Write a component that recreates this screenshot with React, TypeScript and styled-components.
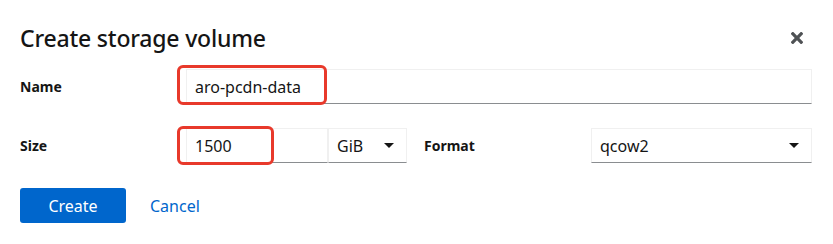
import styled, {createGlobalStyle} from "styled-components";

const GlobalStyle = createGlobalStyle`
    body {
        margin: 0;
        background: #FFFFFF;
        font-family: "Noto Sans", "Open Sans", sans-serif;
        color: #151515;
    }
`

const Modal = styled.div`
    width: 833px;
    height: 244px;
    box-sizing: border-box;
    padding: 22px 21px 0 20px;
    background: #FFFFFF;
`

const Header = styled.div`
    display: flex;
    align-items: center;
    justify-content: space-between;
`

const Title = styled.h1`
    margin: 0;
    font-family: "Noto Sans", sans-serif;
    font-size: 23px;
    font-weight: 500;
    line-height: 32px;
    letter-spacing: -0.2px;
    color: #151515;
`

const CloseButton = styled.button`
    border: none;
    background: none;
    padding: 0;
    margin-right: 9px;
    width: 13px;
    height: 13px;
    display: flex;
    align-items: center;
    justify-content: center;
    color: #4f5255;
    cursor: pointer;
`

const Form = styled.div`
    margin-top: 15px;
    display: grid;
    row-gap: 24px;
`

const FieldRow = styled.div`
    display: grid;
    grid-template-columns: 166px 1fr;
    align-items: center;
`

const SizeRow = styled.div`
    display: grid;
    grid-template-columns: 166px 142px 79px 184px 1fr;
    align-items: center;
`

const Label = styled.label<{indent?: boolean}>`
    font-size: 14px;
    font-weight: 700;
    color: #151515;
    padding-left: ${p => p.indent ? '17px' : '0'};
`

const Control = styled.div`
    position: relative;
    height: 35px;
    box-sizing: border-box;
    border: 1px solid #f0f0f0;
    border-bottom-color: #8a8d90;
    display: flex;
    align-items: center;
    justify-content: space-between;
    padding: 0 11px 0 8px;
    font-size: 16px;
    color: #151515;
    background: #FFFFFF;
`

const SelectControl = styled(Control)`
    padding-right: 12px;
`

const Caret = styled.span`
    width: 0;
    height: 0;
    border-left: 5px solid transparent;
    border-right: 5px solid transparent;
    border-top: 5px solid #151515;
`

const Highlight = styled.div<{w: number; h: number; top: number}>`
    position: absolute;
    left: -10px;
    top: ${p => p.top}px;
    width: ${p => p.w}px;
    height: ${p => p.h}px;
    box-sizing: border-box;
    border: 3px solid #e8392b;
    border-radius: 6px;
    pointer-events: none;
`

const Footer = styled.div`
    margin-top: 25px;
    display: flex;
    align-items: center;
    gap: 24px;
`

const PrimaryButton = styled.button`
    width: 106px;
    height: 35px;
    border: none;
    border-radius: 3px;
    background: #0066cc;
    color: #FFFFFF;
    font-family: "Noto Sans", sans-serif;
    font-size: 16px;
    cursor: pointer;
`

const LinkButton = styled.button`
    border: none;
    background: none;
    padding: 0;
    color: #0066cc;
    font-family: "Noto Sans", sans-serif;
    font-size: 16px;
    cursor: pointer;
`

export default function App() {
    return (
        <>
            <GlobalStyle/>
            <Modal>
                <Header>
                    <Title>Create storage volume</Title>
                    <CloseButton aria-label="Close">
                        <svg width="12" height="12" viewBox="0 0 352 352" fill="currentColor">
                            <path d="M242.72 176L342.79 75.930c12.28-12.28 12.28-32.19 0-44.48L320.55 9.21c-12.28-12.28-32.19-12.28-44.48 0L176 109.28 75.930 9.21c-12.28-12.28-32.19-12.28-44.48 0L9.21 31.45c-12.28 12.28-12.28 32.19 0 44.48L109.28 176 9.21 276.07c-12.28 12.28-12.28 32.19 0 44.48l22.24 22.240c12.28 12.28 32.2 12.28 44.48 0L176 242.72l100.07 100.07c12.28 12.28 32.2 12.28 44.48 0l22.24-22.24c12.28-12.28 12.28-32.19 0-44.48L242.72 176z"/>
                        </svg>
                    </CloseButton>
                </Header>
                <Form>
                    <FieldRow>
                        <Label>Name</Label>
                        <Control>
                            <span>aro-pcdn-data</span>
                            <Highlight w={150} h={40} top={-5}/>
                        </Control>
                    </FieldRow>
                    <SizeRow>
                        <Label>Size</Label>
                        <Control>
                            <span>1500</span>
                            <Highlight w={97} h={39} top={-3}/>
                        </Control>
                        <SelectControl>
                            <span>GiB</span>
                            <Caret/>
                        </SelectControl>
                        <Label indent>Format</Label>
                        <SelectControl>
                            <span>qcow2</span>
                            <Caret/>
                        </SelectControl>
                    </SizeRow>
                </Form>
                <Footer>
                    <PrimaryButton>Create</PrimaryButton>
                    <LinkButton>Cancel</LinkButton>
                </Footer>
            </Modal>
        </>
    );
}
